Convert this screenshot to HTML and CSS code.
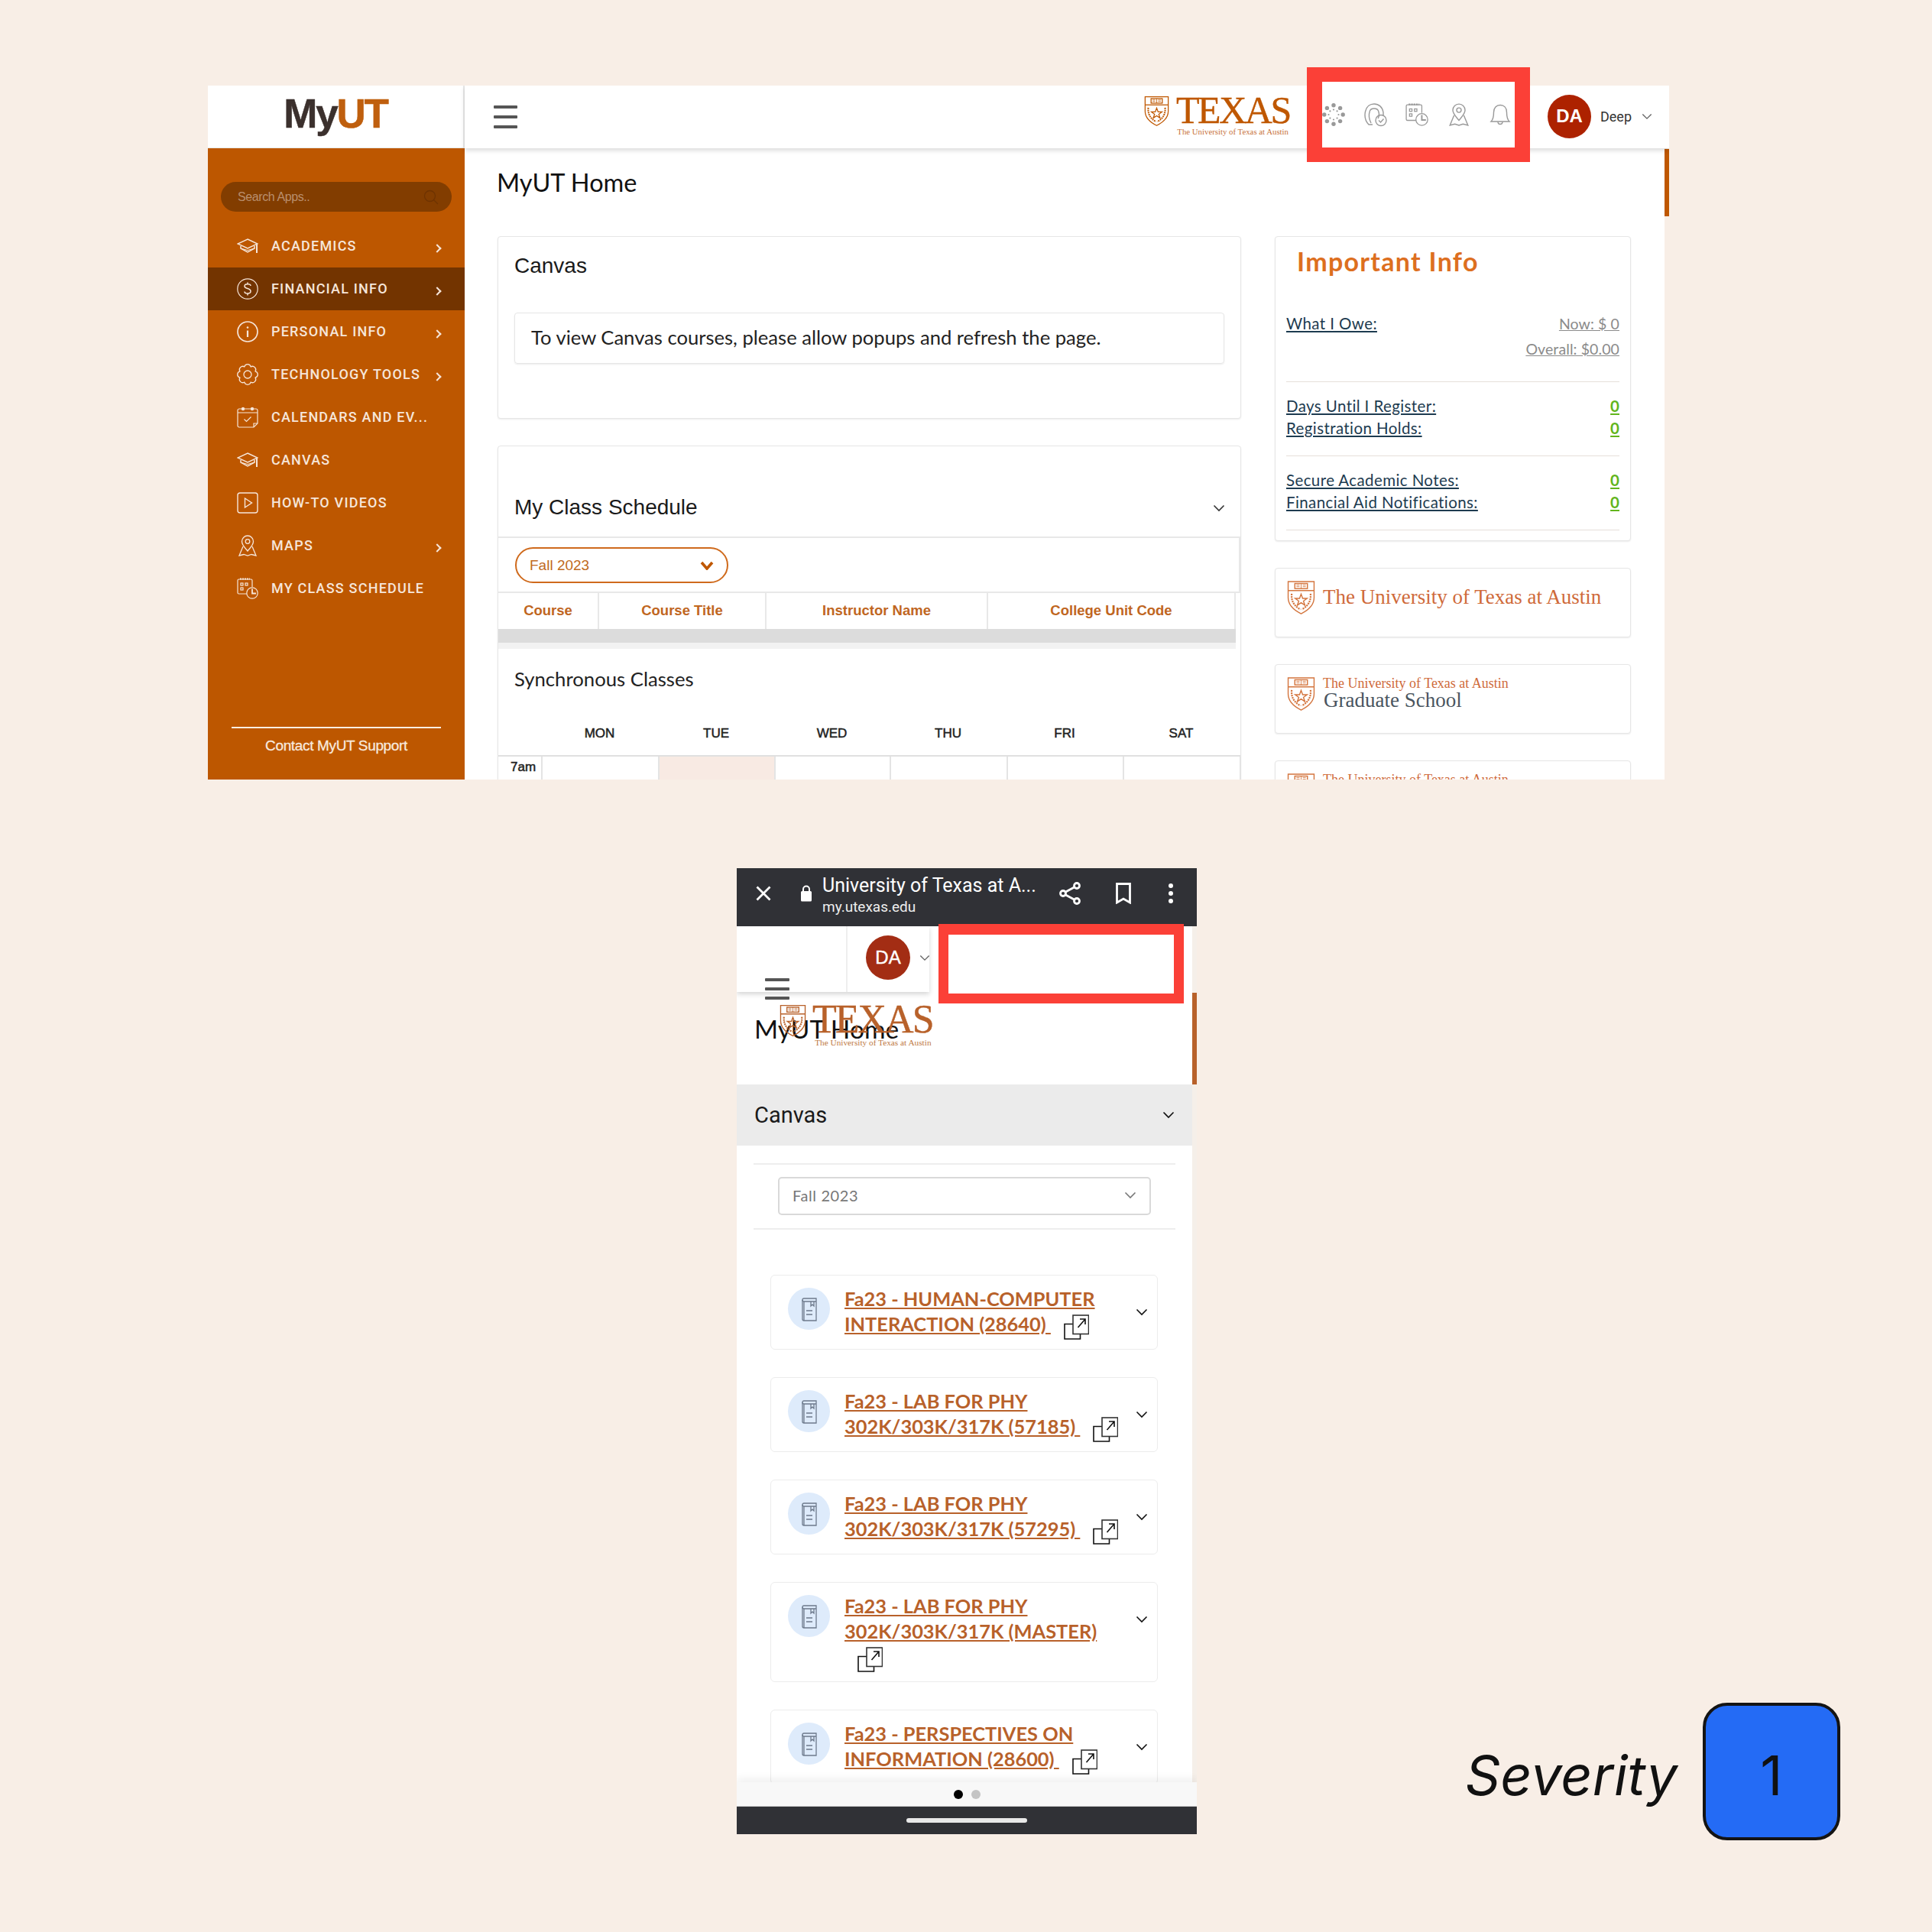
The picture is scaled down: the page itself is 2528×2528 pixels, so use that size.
FILE: index.html
```html
<!DOCTYPE html>
<html lang="en">
<head>
<meta charset="utf-8">
<title>MyUT heuristic finding</title>
<link rel="stylesheet" href="styles.css">
</head>
<body>
<svg class="sprite" aria-hidden="true">
  <symbol id="shield" viewBox="0 0 36 44" fill="none" stroke="currentColor" stroke-width="1.4">
    <path d="M1.5 1.5H34.5V22C34.5 33 25 39 18 42.5C11 39 1.5 33 1.5 22Z"/>
    <path d="M1.5 13H34.5"/>
    <rect x="10" y="4" width="16" height="6.5"/>
    <path d="M18 4V10.5M12 6H16M20 6H24M12 8H16M20 8H24" stroke-width=".8"/>
    <path d="M18 17.5L20 23H25.5L21 26.3L22.8 31.7L18 28.5L13.200 31.700L15 26.3L10.500 23H16Z"/>
    <path d="M6 17C5 27 10 33 17 37M30 17C31 27 26 33 19 37" stroke-width="2.200" stroke-dasharray="2 1"/>
  </symbol>
  <symbol id="cap" viewBox="0 0 28 24" fill="none" stroke="currentColor" stroke-width="1.500">
    <path d="M14 3L27 9L14 15L1 9Z"/>
    <path d="M5 12V15L14 20L23 15V12"/>
    <path d="M5 15L14 17.500L23 15" stroke-width="1"/>
    <path d="M26 10V21" stroke-width="2"/>
  </symbol>
  <symbol id="dollar" viewBox="0 0 28 28" fill="none" stroke="currentColor" stroke-width="1.200">
    <circle cx="14" cy="14" r="13.200"/>
    <path d="M18 10C18 8.300 16 7.800 14 7.800C12 7.800 10 8.600 10 10.500C10 14.500 18 12.500 18 17C18 19 16 20 14 20C12 20 10 19.200 10 17.500M14 5.500V7.800M14 20V22.500" stroke-width="1.500"/>
  </symbol>
  <symbol id="info" viewBox="0 0 28 28" fill="none" stroke="currentColor" stroke-width="1.700">
    <circle cx="14" cy="14" r="13"/>
    <path d="M14 12.500V21" stroke-width="2.200"/>
    <circle cx="14" cy="8.500" r="1.300" fill="currentColor" stroke="none"/>
  </symbol>
  <symbol id="gear" viewBox="0 0 28 28" fill="none" stroke="currentColor" stroke-width="1.300">
    <path d="M24.160 18.210A4.400 4.400 0 0 1 18.210 24.160A4.400 4.400 0 0 1 9.790 24.160A4.400 4.400 0 0 1 3.840 18.210A4.400 4.400 0 0 1 3.840 9.790A4.400 4.400 0 0 1 9.790 3.840A4.400 4.400 0 0 1 18.210 3.840A4.400 4.400 0 0 1 24.160 9.790A4.400 4.400 0 0 1 24.160 18.210Z"/>
    <circle cx="14" cy="14" r="5"/>
  </symbol>
  <symbol id="calendar" viewBox="0 0 28 28" fill="none" stroke="currentColor" stroke-width="1.200">
    <path d="M22 27H3A2 2 0 0 1 1 25V5A2 2 0 0 1 3 3H25A2 2 0 0 1 27 5V22Z"/>
    <path d="M1 8H27M22 27V22H27"/>
    <circle cx="8" cy="3" r="1.600" fill="currentColor"/>
    <circle cx="20" cy="3" r="1.600" fill="currentColor"/>
    <path d="M9.500 16.500L12.500 19.500L18.500 13.500"/>
  </symbol>
  <symbol id="play" viewBox="0 0 28 28" fill="none" stroke="currentColor" stroke-width="1.400">
    <rect x="1" y="1" width="26" height="26" rx="3"/>
    <path d="M10.500 8L19.500 14L10.500 20Z"/>
  </symbol>
  <symbol id="map" viewBox="0 0 28 28" fill="none" stroke="currentColor" stroke-width="1.300">
    <path d="M14 21C10 16 6.500 13 6.500 8.500A7.500 7.500 0 0 1 21.500 8.500C21.500 13 18 16 14 21Z"/>
    <circle cx="14" cy="8.500" r="2.800"/>
    <path d="M8 15L3 27L9 25.500L14 27L19 25.500L25 27L20 15"/>
  </symbol>
  <symbol id="schedule" viewBox="0 0 28 28" fill="none" stroke="currentColor" stroke-width="1.200">
    <path d="M13 21H2.500A1.500 1.500 0 0 1 1 19.500V3.500A1.500 1.500 0 0 1 2.500 2H18.500A1.500 1.500 0 0 1 20 3.500V12"/>
    <path d="M4 1.500H17" stroke-width="2" stroke-dasharray="2 1"/>
    <rect x="5" y="7" width="3" height="3"/><rect x="11" y="7" width="3" height="3"/><rect x="5" y="13" width="3" height="3"/>
    <circle cx="20" cy="20" r="7.200"/>
    <path d="M20 14.500V20.500H25" stroke-width="1.800"/>
  </symbol>
  <symbol id="person" viewBox="0 0 30 30" fill="none" stroke="currentColor" stroke-width="1.400">
    <path d="M11 28H6C1 23 0.500 16 1.500 11C3 4 8 1 13 1C19 1 24 5 25 12V16"/>
    <path d="M9 26C6 20 6 14 7.500 10C9 6 17 6 18.500 10C20 14 20 17 18 20"/>
    <circle cx="22" cy="22.500" r="7"/>
    <path d="M19 22.500L21.500 25L25.500 20.500"/>
  </symbol>
  <symbol id="canvasdots" viewBox="0 0 30 30" fill="currentColor">
    <circle cx="15" cy="2.800" r="2.700"/><circle cx="15" cy="27.200" r="2.700"/><circle cx="2.800" cy="15" r="2.700"/><circle cx="27.200" cy="15" r="2.700"/>
    <circle cx="6.400" cy="6.400" r="2.700"/><circle cx="23.600" cy="6.400" r="2.700"/><circle cx="6.400" cy="23.600" r="2.700"/><circle cx="23.600" cy="23.600" r="2.700"/>
    <circle cx="15" cy="8.500" r="1.100"/><circle cx="15" cy="21.500" r="1.100"/><circle cx="8.500" cy="15" r="1.100"/><circle cx="21.500" cy="15" r="1.100"/>
    <circle cx="10.400" cy="10.400" r="1.100"/><circle cx="19.600" cy="10.400" r="1.100"/><circle cx="10.400" cy="19.600" r="1.100"/><circle cx="19.600" cy="19.600" r="1.100"/>
  </symbol>
  <symbol id="bell" viewBox="0 0 30 30" fill="none" stroke="currentColor" stroke-width="1.400">
    <path d="M3 24C6 21 6.500 18 6.500 12C6.500 6 10 2.500 15 2.500C20 2.500 23.500 6 23.500 12C23.500 18 24 21 27 24Z"/>
    <path d="M12 24.500C12 28.500 18 28.500 18 24.500"/>
  </symbol>
  <symbol id="chev" viewBox="0 0 16 10" fill="none" stroke="currentColor" stroke-width="1.600">
    <path d="M1.500 1.500L8 8L14.500 1.500"/>
  </symbol>
  <symbol id="chev-bold" viewBox="0 0 18 12" fill="none" stroke="currentColor" stroke-width="3.600">
    <path d="M2 2L9 10L16 2"/>
  </symbol>
  <symbol id="external" viewBox="0 0 33 33" fill="none" stroke="#111" stroke-width="1.600">
    <path d="M12 12.500H1V32H21.500V25"/>
    <rect x="12" y="1" width="20.500" height="24.500" stroke="#333" fill="#fff"/>
    <path d="M18.500 17L28 6M21 6H28V13"/>
  </symbol>
  <symbol id="book" viewBox="0 0 20 32" fill="none" stroke="#6d7a8c" stroke-width="1.300">
    <path d="M3 31H19V2H3A2 2 0 0 0 1 4V29A2 2 0 0 0 3 31Z"/>
    <path d="M3 31V6H19M1 4A2 2 0 0 0 3 6"/>
    <path d="M12 6V12L14 10L16 12V6M6 18H14M6 23H14"/>
  </symbol>
</svg>

<section class="desk">
  <header class="desk-bar">
    <div class="brand-cell"><span class="brand"><span class="brand-my">My</span><span class="brand-ut">UT</span></span></div>
    <div class="desk-bar-main">
      <span class="hamburger"><i></i><i></i><i></i></span>
      <div class="texas texas-desk">
        <svg class="texas-shield"><use href="#shield"/></svg>
        <div class="texas-words"><span class="texas-name">TEXAS</span><span class="texas-sub">The University of Texas at Austin</span></div>
      </div>
      <span class="bar-sep"></span>
      <div class="user">
        <span class="avatar">DA</span>
        <span class="user-name">Deep</span>
        <svg class="user-chev"><use href="#chev"/></svg>
      </div>
    </div>
  </header>
  <div class="desk-body">
    <nav class="side">
      <div class="side-search"><span>Search Apps..</span>
        <svg class="search-icon" viewBox="0 0 20 20" fill="none" stroke="currentColor" stroke-width="1.300"><circle cx="8.500" cy="8.500" r="7"/><path d="M13.500 13.500L19 19"/></svg>
      </div>
      <ul class="menu">
        <li class="menu-item"><svg class="menu-icon"><use href="#cap"/></svg><span>ACADEMICS</span><b class="menu-arrow"></b></li>
        <li class="menu-item is-active"><svg class="menu-icon"><use href="#dollar"/></svg><span>FINANCIAL INFO</span><b class="menu-arrow"></b></li>
        <li class="menu-item"><svg class="menu-icon"><use href="#info"/></svg><span>PERSONAL INFO</span><b class="menu-arrow"></b></li>
        <li class="menu-item"><svg class="menu-icon"><use href="#gear"/></svg><span>TECHNOLOGY TOOLS</span><b class="menu-arrow"></b></li>
        <li class="menu-item"><svg class="menu-icon"><use href="#calendar"/></svg><span>CALENDARS AND EV...</span></li>
        <li class="menu-item"><svg class="menu-icon"><use href="#cap"/></svg><span>CANVAS</span></li>
        <li class="menu-item"><svg class="menu-icon"><use href="#play"/></svg><span>HOW-TO VIDEOS</span></li>
        <li class="menu-item"><svg class="menu-icon"><use href="#map"/></svg><span>MAPS</span><b class="menu-arrow"></b></li>
        <li class="menu-item"><svg class="menu-icon"><use href="#schedule"/></svg><span>MY CLASS SCHEDULE</span></li>
      </ul>
      <div class="side-foot">Contact MyUT Support</div>
    </nav>
    <main class="desk-main">
      <h1 class="page-title">MyUT Home</h1>
      <div class="columns">
        <div class="col-left">
          <section class="card canvas-card">
            <h2 class="card-title">Canvas</h2>
            <div class="notice">To view Canvas courses, please allow popups and refresh the page.</div>
          </section>
          <section class="card sched-card">
            <div class="sched-head"><h2 class="card-title">My Class Schedule</h2><svg class="sched-chev"><use href="#chev"/></svg></div>
            <div class="sched-filter">
              <div class="pill"><span>Fall 2023</span><svg class="pill-chev"><use href="#chev-bold"/></svg></div>
            </div>
            <div class="sched-table">
              <span>Course</span><span>Course Title</span><span>Instructor Name</span><span>College Unit Code</span>
            </div>
            <div class="sched-empty"></div>
            <div class="sched-empty-light"></div>
            <h3 class="sync-title">Synchronous Classes</h3>
            <div class="days"><span></span><span>MON</span><span>TUE</span><span>WED</span><span>THU</span><span>FRI</span><span>SAT</span></div>
            <div class="hours"><span class="hour-label">7am</span><span></span><span class="is-today"></span><span></span><span></span><span></span><span></span></div>
          </section>
        </div>
        <div class="col-right">
          <section class="card info-card">
            <h2 class="info-title">Important Info</h2>
            <div class="info-group info-owe">
              <div class="info-row"><a class="info-link">What I Owe:</a><a class="info-money">Now: $ 0</a></div>
              <div class="info-row info-row-end"><a class="info-money">Overall: $0.00</a></div>
            </div>
            <div class="info-group">
              <div class="info-row"><a class="info-link">Days Until I Register:</a><a class="info-zero">0</a></div>
              <div class="info-row"><a class="info-link">Registration Holds:</a><a class="info-zero">0</a></div>
            </div>
            <div class="info-group">
              <div class="info-row"><a class="info-link">Secure Academic Notes:</a><a class="info-zero">0</a></div>
              <div class="info-row"><a class="info-link">Financial Aid Notifications:</a><a class="info-zero">0</a></div>
            </div>
          </section>
          <section class="card logo-card">
            <svg class="logo-shield"><use href="#shield"/></svg>
            <span class="logo-big">The University of Texas at Austin</span>
          </section>
          <section class="card logo-card">
            <svg class="logo-shield"><use href="#shield"/></svg>
            <div class="logo-stack"><span class="logo-small">The University of Texas at Austin</span><span class="logo-dept">Graduate School</span></div>
          </section>
          <section class="card logo-card logo-card-cut">
            <svg class="logo-shield"><use href="#shield"/></svg>
            <div class="logo-stack"><span class="logo-small">The University of Texas at Austin</span></div>
          </section>
        </div>
      </div>
    </main>
    <div class="scroll-track"></div>
  </div>
  <div class="scroll-thumb"></div>
</section>

<div class="mark mark-desk">
  <svg class="hd-icon"><use href="#canvasdots"/></svg>
  <svg class="hd-icon"><use href="#person"/></svg>
  <svg class="hd-icon"><use href="#schedule"/></svg>
  <svg class="hd-icon"><use href="#map"/></svg>
  <svg class="hd-icon"><use href="#bell"/></svg>
</div>

<section class="phone">
  <div class="chrome">
    <svg class="chrome-close" viewBox="0 0 20 20" fill="none" stroke="#fff" stroke-width="2.800"><path d="M1.500 1.500L18.500 18.500M18.500 1.500L1.500 18.500"/></svg>
    <svg class="chrome-lock" viewBox="0 0 16 22" fill="#fff"><path d="M1 9.500A1.500 1.500 0 0 1 2.500 8H13.500A1.500 1.500 0 0 1 15 9.500V20A1.500 1.500 0 0 1 13.500 21.500H2.500A1.500 1.500 0 0 1 1 20Z"/><path d="M4 9V5.500A4 4 0 0 1 12 5.500V9" fill="none" stroke="#fff" stroke-width="2"/></svg>
    <div class="chrome-text"><span class="chrome-title">University of Texas at A...</span><span class="chrome-url">my.utexas.edu</span></div>
    <svg class="chrome-share" viewBox="0 0 28 30" fill="none" stroke="#fff" stroke-width="2.800"><circle cx="5" cy="15" r="3.500"/><circle cx="23" cy="5" r="3.500"/><circle cx="23" cy="25" r="3.500"/><path d="M8 13.300L20 6.700M8 16.700L20 23.300"/></svg>
    <svg class="chrome-mark" viewBox="0 0 20 28" fill="none" stroke="#fff" stroke-width="2.800"><path d="M1.500 1.500H18.500V26L10 21L1.500 26Z"/></svg>
    <svg class="chrome-more" viewBox="0 0 6 26" fill="#fff"><circle cx="3" cy="3" r="3"/><circle cx="3" cy="13" r="3"/><circle cx="3" cy="23" r="3"/></svg>
  </div>
  <div class="phone-body">
    <div class="phone-page">
      <header class="phone-bar">
        <div class="phone-bar-left"></div>
        <div class="phone-bar-user"><span class="avatar avatar-phone">DA</span><svg class="user-chev"><use href="#chev"/></svg></div>
      </header>
      <h1 class="phone-title">MyUT Home</h1>
      <div class="phone-canvas"><span>Canvas</span><svg class="phone-canvas-chev"><use href="#chev"/></svg></div>
      <div class="term-row">
        <div class="term-select"><span>Fall 2023</span><svg class="term-chev"><use href="#chev"/></svg></div>
      </div>
      <ul class="courses">
        <li class="course"><span class="course-dot"><svg class="course-book"><use href="#book"/></svg></span><p class="course-text"><a class="course-link">Fa23 - HUMAN-COMPUTER INTERACTION (28640)&nbsp;</a><svg class="ext"><use href="#external"/></svg></p><svg class="course-chev"><use href="#chev"/></svg></li>
        <li class="course"><span class="course-dot"><svg class="course-book"><use href="#book"/></svg></span><p class="course-text"><a class="course-link">Fa23 - LAB FOR PHY 302K/303K/317K (57185)&nbsp;</a><svg class="ext"><use href="#external"/></svg></p><svg class="course-chev"><use href="#chev"/></svg></li>
        <li class="course"><span class="course-dot"><svg class="course-book"><use href="#book"/></svg></span><p class="course-text"><a class="course-link">Fa23 - LAB FOR PHY 302K/303K/317K (57295)&nbsp;</a><svg class="ext"><use href="#external"/></svg></p><svg class="course-chev"><use href="#chev"/></svg></li>
        <li class="course"><span class="course-dot"><svg class="course-book"><use href="#book"/></svg></span><p class="course-text"><a class="course-link">Fa23 - LAB FOR PHY 302K/303K/317K (MASTER)</a><svg class="ext"><use href="#external"/></svg></p><svg class="course-chev"><use href="#chev"/></svg></li>
        <li class="course"><span class="course-dot"><svg class="course-book"><use href="#book"/></svg></span><p class="course-text"><a class="course-link">Fa23 - PERSPECTIVES ON INFORMATION (28600)&nbsp;</a><svg class="ext"><use href="#external"/></svg></p><svg class="course-chev"><use href="#chev"/></svg></li>
      </ul>
    </div>
    <div class="phone-track"></div>
    <div class="phone-thumb"></div>
    <span class="hamburger hamburger-phone"><i></i><i></i><i></i></span>
    <div class="texas texas-phone">
      <svg class="texas-shield"><use href="#shield"/></svg>
      <div class="texas-words"><span class="texas-name">TEXAS</span><span class="texas-sub">The University of Texas at Austin</span></div>
    </div>
    <div class="phone-dots"><i class="dot-on"></i><i class="dot-off"></i></div>
  </div>
  <div class="phone-nav"><i></i></div>
</section>

<div class="mark mark-phone"></div>

<div class="severity">
  <span class="severity-label">Severity</span>
  <span class="severity-box">1</span>
</div>
</body>
</html>
```
FILE: styles.css
```css
* { box-sizing: border-box; }
html, body { margin: 0; padding: 0; }
body {
  position: relative;
  width: 2528px;
  height: 2528px;
  overflow: hidden;
  background: #f8eee6;
  font-family: "Lato", "Liberation Sans", sans-serif;
  color: #222;
}
h1, h2, h3, p, ul { margin: 0; padding: 0; font-weight: 400; }
ul { list-style: none; }
i { display: block; }
svg { display: block; }
.sprite { position: absolute; width: 0; height: 0; }

/* Desktop screenshot */
.desk {
  position: absolute;
  left: 272px;
  top: 112px;
  width: 1912px;
  height: 908px;
  display: flex;
  flex-direction: column;
  overflow: hidden;
  background: #fff;
  isolation: isolate;
}
.desk-bar {
  position: relative;
  z-index: 2;
  flex: 0 0 82px;
  display: flex;
  background: #fff;
}
.brand-cell {
  flex: 0 0 336px;
  display: flex;
  justify-content: center;
  padding-top: 4px;
  border-right: 2px solid #e8e8e8;
  border-bottom: 1px solid #e8e8e8;
}
.brand {
  font-family: "Liberation Sans", sans-serif;
  font-weight: 700;
  font-size: 53px;
  line-height: 66px;
  letter-spacing: -2.200px;
  -webkit-text-stroke: .5px currentColor;
}
.brand-my { color: #3b302d; }
.brand-ut { color: #bf5f0e; }
.desk-bar-main {
  flex: 1;
  display: flex;
  align-items: center;
  padding: 0 22px 0 38px;
  box-shadow: 0 3px 6px rgba(0, 0, 0, .14);
}
.hamburger { display: flex; flex-direction: column; gap: 9px; width: 31px; }
.hamburger i { height: 4px; background: #555; border-radius: 1px; }
.texas { display: flex; color: #bf5700; }
.texas-desk { margin: 0 11px 0 auto; height: 56px; align-items: flex-start; gap: 9px; }
.texas-shield { width: 33px; height: 41px; flex: none; }
.texas-words { display: flex; flex-direction: column; align-items: flex-end; }
.texas-name {
  font-family: "Liberation Serif", serif;
  font-size: 50px;
  line-height: 38px;
  letter-spacing: -2.400px;
  margin-right: -2px;
  -webkit-text-stroke: .4px currentColor;
}
.texas-sub {
  font-family: "Liberation Serif", serif;
  font-size: 10.800px;
  line-height: 14px;
  margin-top: 2px;
  white-space: nowrap;
  color: #c8733c;
}
.bar-sep { width: 2px; height: 82px; margin-left: 15px; background: #eee; }
.user { margin-left: 311px; padding-bottom: 2px; display: flex; align-items: center; }
.avatar {
  width: 57px;
  height: 57px;
  border-radius: 50%;
  background: #ad2200;
  color: #fff;
  font-family: "Liberation Sans", sans-serif;
  font-weight: 700;
  font-size: 24px;
  display: flex;
  align-items: center;
  justify-content: center;
}
.user-name { margin-left: 12px; font-family: "Roboto", sans-serif; font-size: 18px; color: #333; }
.user-chev { width: 14px; height: 9px; margin-left: 13px; color: #666; }

.desk-body { flex: 1; display: flex; min-height: 0; }
.side {
  flex: 0 0 336px;
  display: flex;
  flex-direction: column;
  padding-top: 44px;
  background: #bd5700;
}
.side-search {
  height: 39px;
  margin: 0 17px;
  padding: 0 17px 0 22px;
  border-radius: 20px;
  background: #823d00;
  color: #b98f6e;
  font-family: "Liberation Sans", sans-serif;
  font-size: 16px;
  letter-spacing: -.4px;
  display: flex;
  align-items: center;
  justify-content: space-between;
}
.search-icon { width: 20px; height: 20px; color: #6e3300; }
.menu { margin-top: 17px; }
.menu-item {
  height: 56px;
  padding: 0 31px 2px 38px;
  display: flex;
  align-items: center;
  color: #f6e6da;
  font-family: "Roboto", sans-serif;
  font-weight: 500;
  font-size: 18px;
  letter-spacing: 1.200px;
  white-space: nowrap;
}
.menu-item.is-active { background: #733400; }
.menu-icon { width: 28px; height: 28px; margin: 2px 17px 0 0; flex: none; }
.menu-arrow {
  width: 8px;
  height: 8px;
  margin: 8px 1px 0 auto;
  border-top: 2.500px solid #f6e6da;
  border-right: 2.500px solid #f6e6da;
  transform: rotate(45deg);
}
.side-foot {
  margin: auto 31px 0;
  padding: 12px 0 34px;
  border-top: 2px solid #fbeee3;
  color: #f8e9de;
  font-family: "Liberation Sans", sans-serif;
  font-size: 19px;
  line-height: 21px;
  letter-spacing: -.35px;
  text-align: center;
  -webkit-text-stroke: .3px #f8e9de;
}
.desk-main { flex: 1; min-width: 0; padding: 25px 44px 0 43px; overflow: hidden; }
.page-title { font-size: 32.500px; line-height: 40px; margin: 0 0 50px -1px; color: #111; }
.columns { display: grid; grid-template-columns: 973px 466px; column-gap: 44px; }
.col-left, .col-right { display: flex; flex-direction: column; gap: 35px; }
.card {
  background: #fff;
  border: 1px solid #e6e6e6;
  border-radius: 4px;
  box-shadow: 0 1px 2px rgba(0, 0, 0, .08);
}
.card-title {
  font-family: "Liberation Sans", sans-serif;
  font-size: 28px;
  line-height: 40px;
  color: #1a1a1a;
}
.canvas-card { height: 239px; padding: 18px 21px 0; }
.notice {
  height: 67px;
  margin-top: 41px;
  padding: 0 20px 4px 21px;
  display: flex;
  align-items: center;
  border: 1px solid #e6e6e6;
  border-radius: 4px;
  box-shadow: 0 1px 2px rgba(0, 0, 0, .08);
  font-size: 25.600px;
  color: #222;
}
.sched-card { height: 600px; }
.sched-head {
  height: 120px;
  padding: 60px 20px 0 21px;
  display: flex;
  justify-content: space-between;
  border-bottom: 2px solid #e8e8e8;
}
.sched-chev { width: 16px; height: 10px; margin-top: 16px; color: #333; }
.sched-filter { height: 72px; padding: 12px 0 0 22px; border-bottom: 2px solid #e8e8e8; border-right: 2px solid #e8e8e8; }
.pill {
  width: 279px;
  height: 47px;
  padding: 0 17px 0 17px;
  display: flex;
  align-items: center;
  justify-content: space-between;
  border: 2px solid #cf6a1c;
  border-radius: 24px;
  color: #bf6a22;
  font-family: "Liberation Sans", sans-serif;
  font-size: 19px;
}
.pill-chev { width: 18px; height: 12px; color: #bf5700; }
.sched-table {
  display: grid;
  grid-template-columns: 132px 219px 290px 324px;
  height: 47px;
}
.sched-table span {
  display: flex;
  align-items: center;
  justify-content: center;
  padding-bottom: 2px;
  border-right: 2px solid #e8e8e8;
  color: #c0661f;
  font-family: "Liberation Sans", sans-serif;
  font-weight: 700;
  font-size: 18.500px;
}
.sched-empty { width: 965px; height: 18px; background: #dcdcdc; }
.sched-empty-light { width: 965px; height: 8px; background: #f2f2f2; }
.sync-title { margin: 19px 0 0 21px; font-size: 25.700px; line-height: 40px; color: #222; }
.days {
  display: grid;
  grid-template-columns: 56px 153px 152px 151px 153px 152px 153px;
  margin-top: 42px;
  height: 20px;
}
.days span {
  text-align: center;
  font-family: "Liberation Sans", sans-serif;
  font-size: 17px;
  line-height: 20px;
  -webkit-text-stroke: .5px #222;
  color: #222;
}
.hours {
  display: grid;
  grid-template-columns: 58px 153px 152px 151px 153px 152px 153px;
  margin-top: 18px;
  height: 40px;
  border-top: 2px solid #e0e0e0;
}
.hours span { border-right: 2px solid #e4e4e4; }
.hours .is-today { background: #f8eae3; }
.hours .hour-label {
  padding: 4px 0 0 16px;
  font-family: "Liberation Sans", sans-serif;
  font-size: 17px;
  line-height: 20px;
  -webkit-text-stroke: .5px #222;
}
.info-card { height: 399px; padding: 0 14px; }
.info-title {
  margin: -2px 0 31px 14px;
  font-size: 34px;
  line-height: 68px;
  font-weight: 700;
  letter-spacing: 1.300px;
  color: #dd6f1f;
}
.info-group { padding: 16.500px 0 21.500px; border-bottom: 1px solid #e6dfd9; }
.info-owe { padding: 0 0 26px; }
.info-row { display: flex; justify-content: space-between; line-height: 29px; font-size: 20.500px; }
.info-owe .info-row { line-height: 33px; }
.info-row-end { justify-content: flex-end; }
.info-link { color: #1d3b50; text-decoration: underline; letter-spacing: .4px; }
.info-money { color: #8b8b8b; text-decoration: underline; letter-spacing: .1px; font-size: 19.500px; }
.info-zero { color: #62b51c; text-decoration: underline; font-weight: 700; }
.logo-card {
  height: 91px;
  padding: 15px 15px 0;
  display: flex;
  align-items: flex-start;
  gap: 10px;
}
.logo-shield { width: 37px; height: 46px; flex: none; color: #d4763f; }
.logo-big {
  font-family: "Liberation Serif", serif;
  font-size: 27px;
  line-height: 46px;
  color: #cf6a3a;
  margin-top: -1px;
}
.logo-stack { display: flex; flex-direction: column; }
.logo-small { font-family: "Liberation Serif", serif; font-size: 18px; line-height: 18px; color: #cf6a3a; }
.logo-dept { font-family: "Liberation Serif", serif; font-size: 27px; line-height: 26px; color: #4a5560; margin-left: 1px; }
.logo-card-cut .logo-stack { margin-top: 0; }
.scroll-track { flex: 0 0 6px; background: #f8eee6; }
.scroll-thumb {
  position: absolute;
  right: 0;
  top: 83px;
  width: 6px;
  height: 88px;
  background: #bf5700;
}

/* Red annotation boxes */
.mark {
  position: absolute;
  background: #fff;
  border: solid #fb4037;
}
.mark-desk {
  left: 1710px;
  top: 88px;
  width: 292px;
  height: 124px;
  border-width: 19px 20px;
  display: flex;
  align-items: center;
  gap: 24.500px;
}
.hd-icon { width: 30px; height: 32px; flex: none; color: #999; }
.mark-phone {
  left: 1228px;
  top: 1209px;
  width: 321px;
  height: 104px;
  border-width: 14px 13px 13px;
}

/* Phone screenshot */
.phone {
  position: absolute;
  left: 964px;
  top: 1136px;
  width: 602px;
  height: 1264px;
  display: flex;
  flex-direction: column;
  overflow: hidden;
  background: #fff;
  isolation: isolate;
}
.chrome {
  flex: 0 0 76px;
  padding-bottom: 2px;
  display: flex;
  align-items: center;
  background: #303136;
  color: #fff;
  font-family: "Roboto", sans-serif;
}
.chrome-close { width: 20px; height: 20px; margin: 0 0 8px 25px; }
.chrome-lock { width: 16px; height: 22px; margin: 0 0 8px 38px; }
.chrome-text { width: 300px; margin-left: 13px; display: flex; flex-direction: column; }
.chrome-title { font-size: 25px; line-height: 30px; white-space: nowrap; margin-top: -3px; }
.chrome-url { font-size: 19px; line-height: 26px; color: #eee; }
.chrome-share { width: 28px; height: 30px; margin: 0 0 8px 10px; }
.chrome-mark { width: 20px; height: 28px; margin: 0 0 8px 46px; }
.chrome-more { width: 6px; height: 26px; margin: 0 0 8px 49px; }
.phone-body { position: relative; flex: 1; min-height: 0; overflow: hidden; display: flex; }
.phone-page { flex: 0 0 596px; }
.phone-track { flex: 0 0 6px; background: #f5efe9; }
.phone-thumb { position: absolute; right: 0; top: 87px; width: 6px; height: 120px; background: #b8612a; }
.phone-bar {
  width: 252px;
  height: 86px;
  display: flex;
  box-shadow: 0 3px 6px rgba(0, 0, 0, .16);
  background: #fff;
}
.phone-bar-left { flex: 0 0 145px; border-right: 2px solid #eee; }
.phone-bar-user { flex: 1; display: flex; align-items: center; padding: 0 0 4px 24px; }
.avatar-phone { width: 58px; height: 58px; flex: none; background: #a32d14; font-weight: 400; -webkit-text-stroke: .4px #fff; }
.phone-bar-user .user-chev { margin-left: 12px; }
.phone-title {
  height: 121px;
  padding: 28px 0 0 23px;
  font-size: 33.500px;
  line-height: 40px;
  color: #111;
}
.hamburger-phone { position: absolute; left: 37px; top: 68px; gap: 8px; width: 32px; }
.texas-phone { position: absolute; left: 56px; top: 102px; gap: 8px; color: #b8612a; }
.texas-phone .texas-shield { width: 35px; height: 43px; }
.texas-phone .texas-name { font-size: 52px; line-height: 40px; letter-spacing: -2px; }
.texas-phone .texas-sub { font-size: 11.300px; color: #c07a44; line-height: 14px; margin-top: 3px; }
.phone-canvas {
  height: 80px;
  padding: 0 23px 0 23px;
  display: flex;
  align-items: center;
  justify-content: space-between;
  background: #ebebeb;
  font-family: "Roboto", sans-serif;
  font-size: 29px;
  color: #1a1a1a;
}
.phone-canvas-chev { width: 16px; height: 10px; color: #111; }
.term-row {
  margin: 23px 22px 0;
  height: 87px;
  padding: 16px 32px 0;
  border-top: 2px solid #eee;
  border-bottom: 2px solid #eee;
}
.term-select {
  height: 50px;
  padding: 0 17px 2px 17px;
  display: flex;
  align-items: center;
  justify-content: space-between;
  border: 2px solid #d9d9d9;
  border-radius: 5px;
  font-size: 20px;
  letter-spacing: .6px;
  color: #777;
}
.term-chev { width: 16px; height: 10px; color: #777; }
.courses { margin: 59px 0 0 44px; width: 507px; display: flex; flex-direction: column; gap: 36px; }
.course {
  position: relative;
  display: flex;
  padding: 14px 0 16px 22px;
  border: 1.500px solid #ececec;
  border-radius: 6px;
  background: #fff;
}
.course-dot {
  flex: none;
  width: 55px;
  height: 55px;
  margin-top: 2px;
  border-radius: 50%;
  background: #deebfb;
  display: flex;
  align-items: center;
  justify-content: center;
}
.course-book { width: 20px; height: 32px; }
.course-text { width: 362px; margin-left: 19px; font-size: 25.400px; line-height: 33px; font-weight: 700; }
.course-link { color: #b8612a; text-decoration: underline; }
.ext { display: inline-block; width: 33px; height: 33px; margin: -4px 0 -4px 17px; vertical-align: -7px; }
.course-chev { position: absolute; right: 12px; top: 43px; width: 16px; height: 10px; color: #111; }
.phone-dots {
  position: absolute;
  left: 0;
  right: 0;
  top: 1120px;
  height: 32px;
  display: flex;
  align-items: center;
  justify-content: center;
  gap: 11px;
  background: #f8f8f8;
  box-shadow: 0 -6px 10px rgba(0, 0, 0, .05);
  z-index: 2;
  border-bottom: 1px solid #ccc;
}
.dot-on, .dot-off { width: 12px; height: 12px; border-radius: 50%; }
.dot-on { background: #000; }
.dot-off { background: #c4c4c4; }
.phone-nav {
  flex: 0 0 36px;
  display: flex;
  align-items: center;
  justify-content: center;
  background: #303136;
  position: relative;
  z-index: 3;
}
.phone-nav i { width: 158px; height: 6px; border-radius: 3px; background: #e8e8e8; }

/* Severity badge */
.severity {
  position: absolute;
  left: 1917px;
  top: 2228px;
  display: flex;
  align-items: center;
  gap: 33px;
  font-family: "Inter", "Liberation Sans", sans-serif;
  font-size: 72px;
  color: #111;
}
.severity-label { font-style: italic; font-weight: 400; padding-top: 8px; }
.severity-box {
  width: 180px;
  height: 180px;
  border: 4px solid #141414;
  border-radius: 32px;
  background: #246bf5;
  font-weight: 400;
  display: flex;
  align-items: center;
  justify-content: center;
  padding-top: 8px;
}
```
